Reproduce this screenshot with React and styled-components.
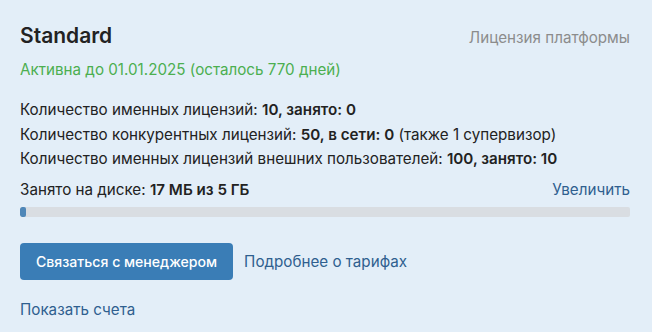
import React from 'react';
import styled, { createGlobalStyle } from 'styled-components';

const GlobalStyle = createGlobalStyle`
  html, body {
    margin: 0;
    padding: 0;
    background: #e3eef8;
    font-family: Inter, "Noto Sans", sans-serif;
  }
`;

const Card = styled.div`
  width: 652px;
  height: 332px;
  box-sizing: border-box;
  padding: 22px 22px 0 20px;
  background: #e3eef8;
  color: #222;
  font-size: 15.2px;
`;

const Header = styled.div`
  display: flex;
  justify-content: space-between;
  align-items: baseline;
`;

const Title = styled.h2`
  margin: 0;
  font-size: 21px;
  font-weight: 600;
  line-height: 28px;
  color: #222;
`;

const Kind = styled.span`
  font-size: 15.2px;
  color: #8c8c8c;
`;

const Status = styled.div`
  margin-top: 9px;
  line-height: 22px;
  color: #4caf50;
`;

const Stats = styled.div`
  margin-top: 17px;
  display: flex;
  flex-direction: column;
`;

const StatLine = styled.div`
  line-height: 24.5px;
  color: #222;

  b {
    font-weight: 600;
  }
`;

const DiskRow = styled.div`
  margin-top: 7px;
  display: flex;
  justify-content: space-between;
  align-items: baseline;
  line-height: 22px;

  b {
    font-weight: 600;
  }
`;

const Link = styled.a`
  font-size: 15.2px;
  color: #2f5f8f;
  text-decoration: none;
  cursor: pointer;
`;

const Track = styled.div`
  margin-top: 6px;
  height: 10px;
  border-radius: 2px;
  background: #d9dde2;
  overflow: hidden;
`;

const Fill = styled.div`
  height: 100%;
  border-radius: 2px;
  background: #4f87b8;
`;

const Actions = styled.div`
  margin-top: 26px;
  display: flex;
  align-items: center;
  gap: 11px;
`;

const Button = styled.button`
  height: 37px;
  padding: 0 16px;
  border: none;
  border-radius: 4px;
  background: #3a7db6;
  color: #fff;
  font-family: inherit;
  font-size: 14.1px;
  font-weight: 500;
  cursor: pointer;
`;

const Footer = styled.div`
  margin-top: 20px;
`;

const used = 17;
const total = 5 * 1024;

export default function App() {
  return (
    <>
      <GlobalStyle />
      <Card>
        <Header>
          <Title>Standard</Title>
          <Kind>Лицензия платформы</Kind>
        </Header>
        <Status>Активна до 01.01.2025 (осталось 770 дней)</Status>
        <Stats>
          <StatLine>
            Количество именных лицензий: <b>10, занято: 0</b>
          </StatLine>
          <StatLine>
            Количество конкурентных лицензий: <b>50, в сети: 0</b> (также 1 супервизор)
          </StatLine>
          <StatLine>
            Количество именных лицензий внешних пользователей: <b>100, занято: 10</b>
          </StatLine>
        </Stats>
        <DiskRow>
          <span>
            Занято на диске: <b>17 МБ из 5 ГБ</b>
          </span>
          <Link>Увеличить</Link>
        </DiskRow>
        <Track>
          <Fill style={{ width: `${Math.max((used / total) * 100, 1)}%` }} />
        </Track>
        <Actions>
          <Button>Связаться с менеджером</Button>
          <Link>Подробнее о тарифах</Link>
        </Actions>
        <Footer>
          <Link>Показать счета</Link>
        </Footer>
      </Card>
    </>
  );
}
